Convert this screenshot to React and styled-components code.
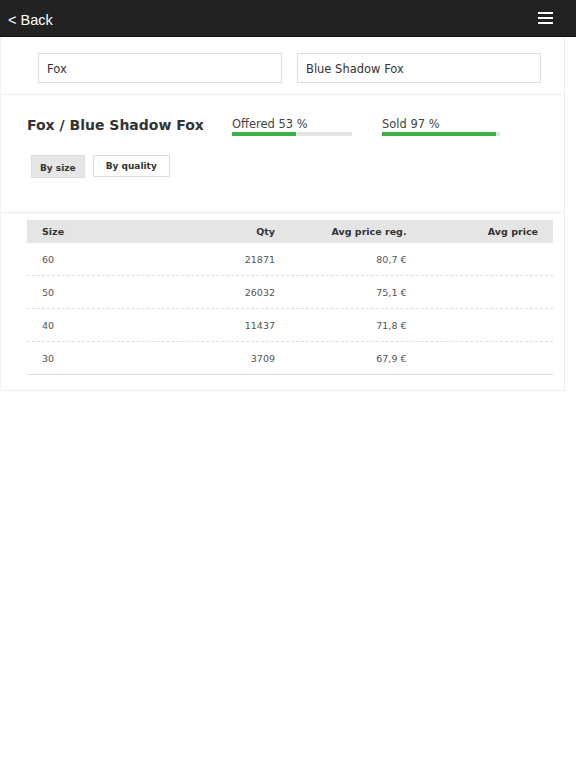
import React from 'react'
import styled, { createGlobalStyle } from 'styled-components'

const GlobalStyle = createGlobalStyle`
    html, body {
        margin: 0;
        padding: 0;
        background: #fff;
    }
    body {
        font-family: "DejaVu Sans", Verdana, sans-serif;
        color: #333;
    }
`;

const TopBar = styled.header`
    height: 36px;
    background: #222;
    border-bottom: 1px solid #111;
    display: flex;
    align-items: center;
    justify-content: space-between;
    padding: 0 23px 0 8px;
    color: #fff;
`;

const BackLink = styled.span`
    font-family: "Liberation Sans", Arial, sans-serif;
    font-size: 14.5px;
    padding-top: 3px;
`;

const Burger = styled.div`
    width: 15px;
    display: flex;
    flex-direction: column;
    gap: 3px;
    span {
        display: block;
        height: 2px;
        background: #fff;
    }
`;

const Panel = styled.main`
    width: 565px;
    border-right: 1px solid #eee;
    border-left: 1px solid #f2f2f2;
    border-bottom: 1px solid #eee;
    box-sizing: border-box;
`;

const Section = styled.section`
    padding: ${p => p.$pad};
    border-bottom: ${p => (p.$last ? 'none' : '1px solid #eee')};
`;

const Fields = styled.div`
    display: flex;
    gap: 15px;
`;

const Field = styled.div`
    width: 244px;
    height: 30px;
    box-sizing: border-box;
    border: 1px solid #ddd;
    display: flex;
    align-items: center;
    padding: 1px 8px 0;
    font-size: 11.5px;
    color: #333;
`;

const HeadRow = styled.div`
    display: flex;
    align-items: flex-start;
`;

const Title = styled.h1`
    margin: 0;
    font-size: 14px;
    font-weight: bold;
    color: #333;
    width: 205px;
`;

const Stat = styled.div`
    width: 150px;
    font-size: 11.5px;
    color: #444;
`;

const Track = styled.div`
    width: ${p => p.$w}px;
    height: 4px;
    background: #e3e3e3;
    margin-top: 1px;
`;

const Fill = styled.div`
    height: 100%;
    background: #3cb045;
`;

const Tabs = styled.div`
    display: flex;
    gap: 8px;
    margin-top: 19px;
    padding-left: 4px;
`;

const Tab = styled.button`
    font-family: "DejaVu Sans", Verdana, sans-serif;
    font-size: 9px;
    font-weight: bold;
    color: #333;
    height: ${p => (p.$active ? '23px' : '22px')};
    padding: ${p => (p.$active ? '3px 8px 0' : '0 12px')};
    border: 1px solid #ddd;
    background: ${p => (p.$active ? '#e6e6e6' : '#fff')};
    border-radius: 0;
`;

const Table = styled.div`
    border-bottom: 1px solid #ddd;
`;

const Row = styled.div`
    display: grid;
    grid-template-columns: repeat(4, 1fr);
    height: ${p => (p.$head ? '23px' : '32px')};
    align-items: center;
    background: ${p => (p.$head ? '#e5e5e5' : 'transparent')};
    font-size: 9.5px;
    font-weight: ${p => (p.$head ? 'bold' : 'normal')};
    color: ${p => (p.$head ? '#333' : '#555')};
    border-top: ${p => (p.$dash ? '1px dashed #ddd' : 'none')};
`;

const Cell = styled.div`
    padding: 0 15px;
    text-align: ${p => (p.$right ? 'right' : 'left')};
`;

const rows = [
    ['60', '21871', '80,7 €', ''],
    ['50', '26032', '75,1 €', ''],
    ['40', '11437', '71,8 €', ''],
    ['30', '3709', '67,9 €', ''],
];

const App = () => {
    return (
        <>
            <GlobalStyle />
            <TopBar>
                <BackLink>&lt; Back</BackLink>
                <Burger>
                    <span />
                    <span />
                    <span />
                </Burger>
            </TopBar>
            <Panel>
                <Section $pad="16px 23px 11px 37px">
                    <Fields>
                        <Field>Fox</Field>
                        <Field>Blue Shadow Fox</Field>
                    </Fields>
                </Section>
                <Section $pad="22px 26px 34px 26px">
                    <HeadRow>
                        <Title>Fox / Blue Shadow Fox</Title>
                        <Stat>
                            Offered 53 %
                            <Track $w={120}>
                                <Fill style={{ width: '53%' }} />
                            </Track>
                        </Stat>
                        <Stat>
                            Sold 97 %
                            <Track $w={118}>
                                <Fill style={{ width: '97%' }} />
                            </Track>
                        </Stat>
                    </HeadRow>
                    <Tabs>
                        <Tab $active>By size</Tab>
                        <Tab>By quality</Tab>
                    </Tabs>
                </Section>
                <Section $pad="7px 11px 15px 26px" $last>
                    <Table>
                        <Row $head>
                            <Cell>Size</Cell>
                            <Cell $right>Qty</Cell>
                            <Cell $right>Avg price reg.</Cell>
                            <Cell $right>Avg price</Cell>
                        </Row>
                        {rows.map((r, i) => (
                            <Row key={r[0]} $dash={i > 0}>
                                <Cell>{r[0]}</Cell>
                                <Cell $right>{r[1]}</Cell>
                                <Cell $right>{r[2]}</Cell>
                                <Cell $right>{r[3]}</Cell>
                            </Row>
                        ))}
                    </Table>
                </Section>
            </Panel>
        </>
    )
}

export default App
